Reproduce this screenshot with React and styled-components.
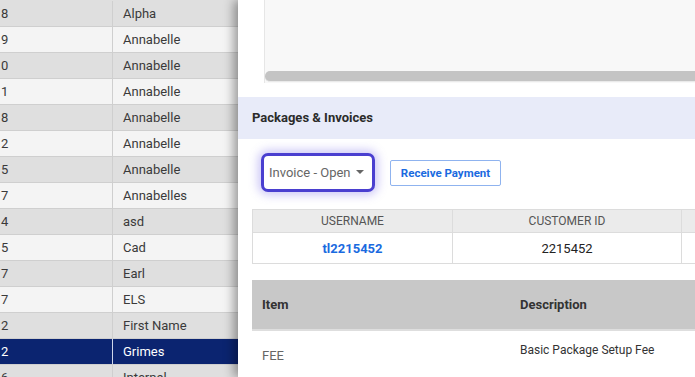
import React from 'react';
import styled, { createGlobalStyle } from 'styled-components';

const GlobalStyle = createGlobalStyle`
  html, body {
    margin: 0;
    padding: 0;
    overflow: hidden;
    background: #fff;
  }
  body {
    font-family: Roboto, "Liberation Sans", Arial, sans-serif;
  }
`;

const Page = styled.div`
  display: flex;
  width: 695px;
  height: 377px;
  overflow: hidden;
`;

const List = styled.div`
  width: 238px;
  flex-shrink: 0;
  padding-top: 1px;
  background: #dfdfdf;
`;

const Row = styled.div`
  display: grid;
  grid-template-columns: 113px 1fr;
  height: 25px;
  border-bottom: 1px solid #cfcfcf;
  background: ${p => (p.selected ? '#0b2470' : p.odd ? '#dfdfdf' : '#f4f4f4')};
  color: ${p => (p.selected ? '#fff' : '#3a3a3a')};
  font-size: 13px;
  line-height: 25px;
`;

const Cell = styled.div`
  padding-left: ${p => p.pad || 0}px;
  border-right: ${p => (p.divider ? '1px solid' : 'none')};
  border-color: ${p => (p.selected ? '#cfd6ea' : '#cfcfcf')};
  white-space: nowrap;
  overflow: hidden;
`;

const Panel = styled.div`
  position: relative;
  z-index: 1;
  flex: 1;
  min-width: 0;
  background: #fff;
  box-shadow: -4px 0 10px rgba(0, 0, 0, 0.38);
  overflow: hidden;
`;

const PreviewBox = styled.div`
  margin-left: 26px;
  height: 83px;
  background: #f8f8f8;
  border-left: 1px solid #e6e6e6;
  display: flex;
  flex-direction: column;
  justify-content: flex-end;
`;

const Scrollbar = styled.div`
  height: 10px;
  margin-bottom: 1px;
  background: #c4c4c4;
  border-radius: 5px 0 0 5px;
  border-bottom: 1px solid #eaeaea;
`;

const SectionHeader = styled.div`
  margin-top: 14px;
  height: 42px;
  background: #e8ebf9;
  display: flex;
  align-items: center;
  padding: 0 0 1px 14px;
  box-sizing: border-box;
  font-size: 13px;
  font-weight: 700;
  color: #2b2b2b;
`;

const Body = styled.div`
  padding: 14px 0 0 14px;
`;

const Actions = styled.div`
  display: flex;
  align-items: center;
  gap: 15px;
  padding-left: 9px;
`;

const Dropdown = styled.button`
  display: flex;
  align-items: center;
  gap: 5px;
  width: 114px;
  height: 39px;
  padding: 0 0 0 5px;
  border: 3px solid #4a3fd0;
  border-radius: 7px;
  background: #fff;
  box-shadow: 0 0 10px 3px rgba(110, 95, 230, 0.35);
  font-family: inherit;
  font-size: 13px;
  color: #666;
`;

const Caret = styled.span`
  width: 0;
  height: 0;
  border-left: 4px solid transparent;
  border-right: 4px solid transparent;
  border-top: 4px solid #666;
  margin-top: -2px;
`;

const OutlineButton = styled.button`
  width: 111px;
  height: 26px;
  border: 1px solid #8fb3ef;
  border-radius: 2px;
  background: #fff;
  font-family: inherit;
  font-size: 11.5px;
  font-weight: 700;
  color: #1a6ae0;
  padding: 0;
`;

const InfoTable = styled.div`
  margin-top: 17px;
  display: grid;
  grid-template-columns: 200px 229px 200px;
  border-left: 1px solid #dcdcdc;
  width: 640px;
`;

const InfoHead = styled.div`
  height: 22px;
  background: #ebebeb;
  border-top: 1px solid #dcdcdc;
  border-right: 1px solid #dcdcdc;
  display: flex;
  align-items: center;
  justify-content: center;
  font-size: 12px;
  color: #555;
  text-transform: uppercase;
`;

const InfoCell = styled.div`
  height: 30px;
  border-top: 1px solid #dcdcdc;
  border-right: 1px solid #dcdcdc;
  border-bottom: 1px solid #dcdcdc;
  display: flex;
  align-items: center;
  justify-content: center;
  font-size: 13px;
  font-weight: ${p => (p.link ? 700 : 400)};
  color: ${p => (p.link ? '#1a6ae0' : '#222')};
`;

const ItemTable = styled.div`
  margin-top: 16px;
  width: 640px;
`;

const ItemRow = styled.div`
  display: grid;
  grid-template-columns: 258px 1fr;
`;

const ItemHead = styled.div`
  height: 49px;
  background: #c8c8c8;
  border-bottom: 2px solid #dedede;
  display: flex;
  align-items: center;
  padding-left: 10px;
  font-size: 13px;
  font-weight: 700;
  color: #333;
`;

const ItemCell = styled.div`
  padding: ${p => (p.top ? '12px' : '17px')} 0 0 10px;
  font-size: ${p => (p.small ? 12 : 13)}px;
  color: ${p => (p.muted ? '#666' : '#333')};
`;

const rows = [
  ['8', 'Alpha'],
  ['9', 'Annabelle'],
  ['0', 'Annabelle'],
  ['1', 'Annabelle'],
  ['8', 'Annabelle'],
  ['2', 'Annabelle'],
  ['5', 'Annabelle'],
  ['7', 'Annabelles'],
  ['4', 'asd'],
  ['5', 'Cad'],
  ['7', 'Earl'],
  ['7', 'ELS'],
  ['2', 'First Name'],
  ['2', 'Grimes'],
  ['6', 'Internal'],
];

const App = () => {
  return (
    <>
      <GlobalStyle />
      <Page>
        <List>
          {rows.map(([id, name], i) => {
            const selected = name === 'Grimes';
            return (
              <Row key={i} odd={i % 2 === 0} selected={selected}>
                <Cell divider selected={selected} pad={1}>{id}</Cell>
                <Cell pad={10}>{name}</Cell>
              </Row>
            );
          })}
        </List>
        <Panel>
          <PreviewBox>
            <Scrollbar />
          </PreviewBox>
          <SectionHeader>Packages &amp; Invoices</SectionHeader>
          <Body>
            <Actions>
              <Dropdown>
                Invoice - Open <Caret />
              </Dropdown>
              <OutlineButton>Receive Payment</OutlineButton>
            </Actions>
            <InfoTable>
              <InfoHead>Username</InfoHead>
              <InfoHead>Customer ID</InfoHead>
              <InfoHead />
              <InfoCell link>tl2215452</InfoCell>
              <InfoCell>2215452</InfoCell>
              <InfoCell />
            </InfoTable>
            <ItemTable>
              <ItemRow>
                <ItemHead>Item</ItemHead>
                <ItemHead>Description</ItemHead>
              </ItemRow>
              <ItemRow>
                <ItemCell muted>FEE</ItemCell>
                <ItemCell top small>Basic Package Setup Fee</ItemCell>
              </ItemRow>
            </ItemTable>
          </Body>
        </Panel>
      </Page>
    </>
  );
};

export default App;
